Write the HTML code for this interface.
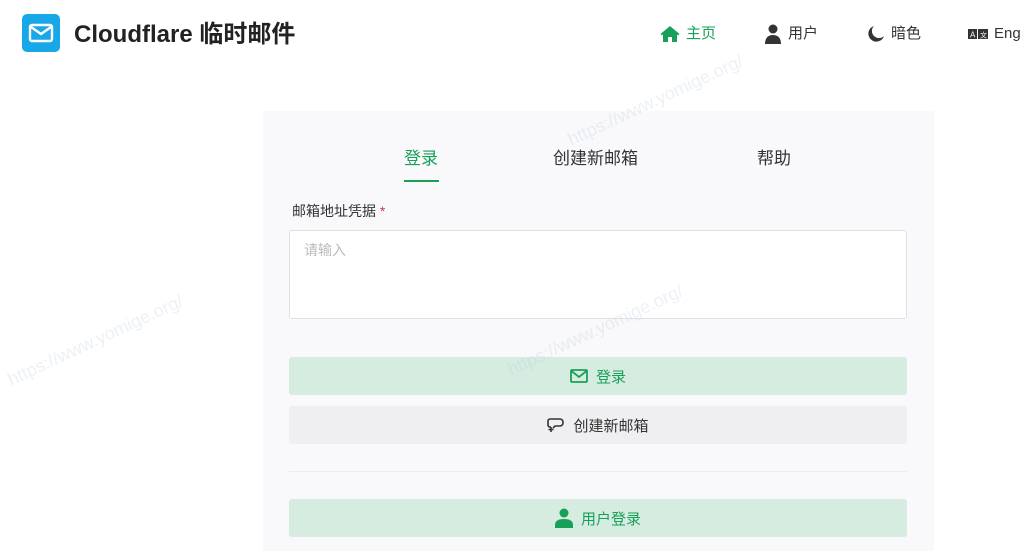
<!DOCTYPE html>
<html><head><meta charset="utf-8"><style>
*{box-sizing:border-box;margin:0;padding:0}
body{width:1024px;height:547px;overflow:hidden;background:#fff;font-family:"Liberation Sans","Noto Sans CJK SC",sans-serif;color:#333;position:relative}
.logo{position:absolute;left:22px;top:14px;width:38px;height:38px;border-radius:5px;background:#18a8e8}
.title{position:absolute;left:74px;top:20px;font-size:24px;font-weight:bold;color:#222;line-height:30px}
.nav{position:absolute;top:24px;font-size:15px;line-height:20px;display:flex;align-items:center;gap:6px;color:#333}
.card{position:absolute;left:263px;top:111px;width:671px;height:440px;background:#f9f9fb}
.tab{position:absolute;top:147px;font-size:17px;line-height:24px;color:#333}
.ul{position:absolute;left:404px;top:180px;width:35px;height:2px;background:#18a058}
.label{position:absolute;left:292px;top:201px;font-size:14px;line-height:20px;color:#333}
.ta{position:absolute;left:289px;top:230px;width:618px;height:89px;border:1px solid #e0e0e6;border-radius:3px;background:#fff;padding:9px 14px;font-size:14px;color:#bbb}
.btn{position:absolute;left:289px;width:618px;height:38px;border-radius:3px;display:flex;align-items:center;justify-content:center;gap:8px;font-size:15px}
.g{background:#d6ece0;color:#18a058}
.n{background:#efeff2;color:#333}
.hr{position:absolute;left:289px;top:471px;width:618px;height:1px;background:#ececef}
.wm{position:absolute;color:rgba(180,200,220,.25);font-size:18px;transform:rotate(-25deg);white-space:nowrap}
</style></head><body>
<div class="logo"><svg width="38" height="38" viewBox="0 0 38 38"><rect x="8" y="11" width="22" height="16" rx="2" fill="none" stroke="#fff" stroke-width="2.4"/><path d="M9 13l10 7 10-7" fill="none" stroke="#fff" stroke-width="2.4"/></svg></div>
<div class="title">Cloudflare 临时邮件</div>
<div class="nav" style="left:660px;color:#18a058"><svg width="20" height="18" viewBox="0 0 20 18"><path d="M10 1L0.5 9l1.3 1.4L3 9.4V17h5v-5h4v5h5V9.4l1.2 1L19.5 9z" fill="#18a058"/></svg>主页</div>
<div class="nav" style="left:764px"><svg width="18" height="20" viewBox="0 0 18 20"><circle cx="9" cy="5" r="4.5" fill="#333"/><path d="M1 20c0-6 3-9 8-9s8 3 8 9z" fill="#333"/></svg>用户</div>
<div class="nav" style="left:867px"><svg width="18" height="18" viewBox="0 0 18 18"><path d="M7 1a8 8 0 1 0 10 10A7 7 0 0 1 7 1z" fill="#333"/></svg>暗色</div>
<div class="nav" style="left:968px"><svg width="20" height="14" viewBox="0 0 20 14"><rect x="0" y="2" width="9" height="10" fill="#333"/><rect x="10" y="2" width="10" height="10" fill="#333"/><text x="2" y="10.5" font-size="8" fill="#fff" font-family="Liberation Sans">A</text><text x="12" y="10.5" font-size="7" fill="#fff">文</text></svg>Eng</div>
<div class="card"></div>
<div class="tab" style="left:404px;color:#18a058">登录</div>
<div class="tab" style="left:553px">创建新邮箱</div>
<div class="tab" style="left:757px">帮助</div>
<div class="ul"></div>
<div class="label">邮箱地址凭据 <span style="color:#d03050">*</span></div>
<div class="ta">请输入</div>
<div class="btn g" style="top:357px"><svg width="18" height="14" viewBox="0 0 18 14"><rect x="1" y="1" width="16" height="12" rx="1" fill="none" stroke="#18a058" stroke-width="1.8"/><path d="M1.5 2l7.5 6 7.5-6" fill="none" stroke="#18a058" stroke-width="1.8"/></svg>登录</div>
<div class="btn n" style="top:406px"><svg width="18" height="16" viewBox="0 0 18 16"><path d="M4 10H3a2 2 0 0 1-2-2V4a2 2 0 0 1 2-2h10a3 3 0 0 1 3 3v1a3 3 0 0 1-3 3H8l-2 2" fill="none" stroke="#333" stroke-width="1.6"/><path d="M4 10v5M1.5 12.5h5" stroke="#333" stroke-width="1.6"/></svg>创建新邮箱</div>
<div class="hr"></div>
<div class="btn g" style="top:499px"><svg width="18" height="20" viewBox="0 0 18 20"><circle cx="9" cy="5" r="4.5" fill="#18a058"/><path d="M0 20v-3c0-4 3-6 9-6s9 2 9 6v3z" fill="#18a058"/></svg>用户登录</div>
<div class="wm" style="left:560px;top:90px">https://www.yomige.org/</div>
<div class="wm" style="left:0;top:330px">https://www.yomige.org/</div>
<div class="wm" style="left:500px;top:320px">https://www.yomige.org/</div>
</body></html>
